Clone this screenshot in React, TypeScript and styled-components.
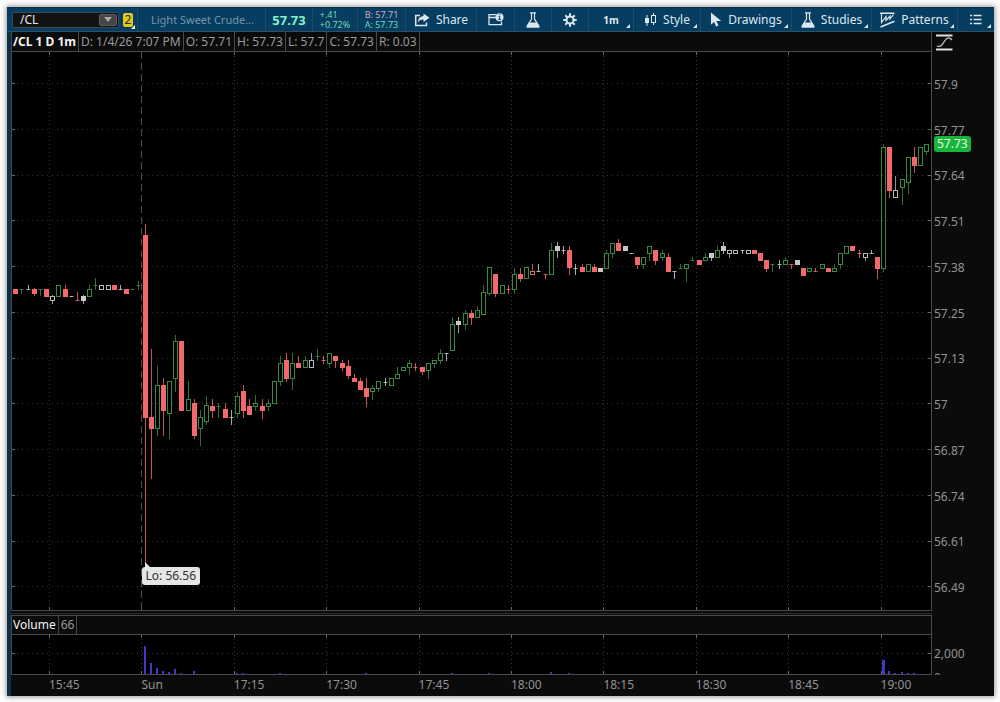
import React from "react";
import styled, { createGlobalStyle, css } from "styled-components";

const ink = "#dbe7ee";
const rule = "#4a4a4a";

const GlobalStyle = createGlobalStyle`
  *, *::before, *::after { box-sizing: border-box; }
  body { margin: 0; background: #fdfdfd; font-family: "Noto Sans", "Open Sans", sans-serif; }
  button, input { font: inherit; color: inherit; }
`;

const Page = styled.div`
  padding: 7px 6px 6px 7px;
`;

const Window = styled.main`
  background: #0b0b0c;
  box-shadow: 0 0 5px 1px rgba(0, 0, 0, 0.4);
`;

/* ---------- toolbar ---------- */

const Toolbar = styled.header`
  display: flex;
  height: 25px;
  background: #063d60;
  border-top: 1px solid #0a2f47;
  border-bottom: 1px solid #2c5068;
  color: ${ink};
  font-size: 12px;
  line-height: 16px;
`;

const cell = css<{ $w?: number }>`
  display: flex;
  align-items: center;
  justify-content: center;
  flex: ${(p) => (p.$w ? `0 0 ${p.$w}px` : "1 1 0")};
  min-width: 0;
  white-space: nowrap;
  border: 0;
  border-left: 1px solid #1d4c6b;
`;

const Cell = styled.div<{ $w?: number }>`
  ${cell}
`;

const ToolButton = styled.button<{ $w?: number; $menu?: boolean }>`
  ${cell}
  position: relative;
  gap: 6px;
  padding: 0;
  background: none;
  ${(p) =>
    p.$menu &&
    css`
      &::after {
        content: "";
        position: absolute;
        right: 3px;
        bottom: 3px;
        border-left: 4px solid transparent;
        border-bottom: 4px solid ${ink};
      }
    `}
`;

const SymbolCell = styled.div`
  display: flex;
  align-items: center;
  flex: 0 0 130px;
  gap: 4px;
  padding-left: 5px;
`;

const SymbolBox = styled.div`
  display: flex;
  align-items: center;
  width: 107px;
  height: 16px;
  padding-right: 1px;
  background: #131313;
  border: 1px solid #3b4a54;
  border-radius: 2px;
`;

const SymbolInput = styled.input`
  flex: 1;
  min-width: 0;
  height: 14px;
  padding: 0 0 0 7px;
  border: 0;
  background: none;
  color: #e6e6e6;
  outline: none;
`;

const DropButton = styled.button`
  display: grid;
  place-items: center;
  width: 18px;
  height: 12px;
  padding: 0;
  border: 1px solid #5c5c5c;
  border-radius: 2px;
  background: #454545;
  &::before {
    content: "";
    border: 4px solid transparent;
    border-top: 5px solid #a8a8a8;
    border-bottom: 0;
  }
`;

const LinkBadge = styled.button`
  position: relative;
  width: 10px;
  height: 14px;
  padding: 0;
  border: 0;
  border-radius: 2px;
  background: #e3c81c;
  color: #2c2600;
  line-height: 14px;
  &::after {
    content: "";
    position: absolute;
    right: -2px;
    bottom: -2px;
    border-left: 4px solid transparent;
    border-bottom: 4px solid #fff;
  }
`;

const Description = styled.span`
  padding-left: 2px;
  color: #7795a6;
  font-size: 11px;
`;

const LastPrice = styled.strong`
  color: #86f0cb;
  font-size: 13px;
`;

const Stack = styled.div<{ $color: string }>`
  color: ${(p) => p.$color};
  font-size: 9px;
  line-height: 10px;
`;

const BidLine = styled.div`
  color: #d9a9b4;
`;

const Interval = styled.strong`
  font-size: 10px;
`;

const Icon = styled.svg`
  flex: none;
  fill: none;
  stroke: ${ink};
`;

/* ---------- chart frame ---------- */

const Frame = styled.div`
  display: grid;
  grid-template-columns: minmax(0, 1fr) 62px;
  grid-template-rows: 20px 559px 4px 20px 40px 21px;
  border-left: 4px solid #0c3049;
`;

const StudyRow = styled.div`
  display: flex;
  background: #0b0b0c;
  border: 1px solid ${rule};
  border-top: 0;
  color: #9a9a9a;
  font-size: 12px;
  line-height: 19px;
`;

const StudyItem = styled.span<{ $title?: boolean; $bold?: boolean }>`
  padding: 0 2px 0 ${(p) => (p.$title ? 1 : 2)}px;
  white-space: nowrap;
  border-right: 1px solid ${rule};
  color: ${(p) => (p.$title ? "#f4f4f4" : "inherit")};
  font-weight: ${(p) => (p.$bold ? 700 : 400)};
`;

const VolumeRow = styled(StudyRow)`
  border-top: 1px solid ${rule};
  line-height: 18px;
`;

const ModeButton = styled.button`
  padding: 1px 0 0 4px;
  border: 0;
  background: none;
  text-align: left;
  line-height: 0;
`;

const Plot = styled.div`
  position: relative;
  background: #000;
  border: 1px solid ${rule};
  border-top: 0;
`;

const Drawing = styled.svg`
  display: block;
  width: 100%;
  height: 100%;
`;

const Callout = styled.div`
  position: absolute;
  padding: 0 4px;
  border-radius: 3px;
  background: #e6e6e6;
  color: #333;
  font-size: 12px;
  line-height: 18px;
  white-space: nowrap;
  &::before {
    content: "";
    position: absolute;
    left: 3px;
    top: -5px;
    border-left: 0 solid transparent;
    border-right: 6px solid transparent;
    border-bottom: 6px solid #e6e6e6;
  }
`;

const PriceAxis = styled.div`
  position: relative;
  display: grid;
  grid-auto-rows: 1fr;
  align-items: center;
  padding: 10px 0 0 2px;
  color: #929292;
  font-size: 12px;
  line-height: 16px;
`;

const PriceTag = styled.div`
  position: absolute;
  left: 2px;
  top: 84px;
  padding: 0 3px;
  border-radius: 3px;
  background: #17b53a;
  color: #e8ffe8;
  line-height: 16px;
`;

const Splitter = styled.div`
  border-bottom: 1px solid #2c2c2c;
  height: 3px;
`;

const VolumeAxis = styled.div`
  padding: 7px 0 0 2px;
  overflow: hidden;
  color: #929292;
  font-size: 12px;
  line-height: 24px;
`;

const TimeAxis = styled.div`
  grid-column: 1 / -1;
  display: grid;
  grid-template-columns: repeat(10, minmax(0, 1fr));
  padding: 0 21px 0 38px;
  color: #929292;
  font-size: 12px;
  line-height: 20px;
`;

/* ---------- data ---------- */

/*
 * One candle per minute: kind, high, body top, body bottom, low.
 * r = filled down, G = hollow up, W = hollow unchanged, w = filled unchanged,
 * R = hollow red, g = thin green. Equal body values draw a dash.
 */
const candleText = `
r 289 289 293 293|g 289 289 289 293|w 285 289 289 289|r 288 289 293 295|g 289 289 289 295
r 289 289 296 296|W 295 296 300 303|G 285 285 296 296|r 285 289 296 296|w 296 296 296 296
r 292 300 300 300|w 295 296 300 303|G 285 289 296 296|g 278 285 285 289|W 285 285 289 289
W 285 285 289 289|r 285 285 289 289|w 285 289 289 289|r 289 289 293 293|g 289 289 289 289
g 281 285 285 289|r 224 235 417 562|r 349 417 428 478|G 366 385 428 435|r 378 385 410 435
G 381 381 413 438|G 335 341 378 391|r 341 341 410 410|G 381 399 410 410|r 399 403 435 438
G 410 417 428 445|G 396 405 421 424|r 399 406 410 417|g 403 406 406 417|r 403 409 417 417
w 410 417 417 424|G 392 396 413 417|r 385 391 410 417|r 399 406 414 414|G 395 403 406 410
r 399 406 410 418|G 399 403 406 410|G 381 381 403 403|G 356 363 381 385|r 353 360 378 381
G 353 363 378 389|r 356 363 367 367|G 356 360 367 367|W 353 360 367 367|g 349 356 356 360
r 356 360 360 363|G 353 353 363 367|r 356 356 360 367|r 360 363 367 370|r 360 366 375 378
r 374 378 381 381|r 378 381 389 389|r 378 388 396 406|G 385 388 391 399|G 381 381 388 391
w 378 382 382 385|G 378 378 385 385|G 367 374 378 378|G 367 367 370 370|G 360 363 367 374
r 363 367 367 370|r 367 367 371 374|G 363 363 370 378|G 360 360 363 367|G 349 353 360 363
w 353 353 353 360|G 317 324 350 350|w 317 321 324 332|G 310 313 324 329|r 310 313 317 324
G 306 310 317 317|G 285 292 314 314|G 267 267 293 295|r 274 274 293 296|G 285 285 293 293
r 285 289 289 293|G 268 274 289 293|r 268 274 278 281|G 267 267 278 278|R 264 271 274 274
w 264 271 271 271|r 274 274 274 278|G 243 250 274 274|w 242 246 250 257|w 246 250 250 253
r 246 250 267 274|w 264 268 268 274|r 264 267 271 271|G 264 264 271 271|r 264 267 271 271
w 268 268 271 271|G 250 253 268 268|G 243 243 253 257|r 239 243 250 250|w 246 246 250 250
w 253 253 253 253|r 257 257 264 268|G 257 257 264 268|G 246 246 253 260|r 250 250 260 264
G 250 253 257 260|r 253 257 271 271|w 271 271 271 278|g 264 268 268 268|G 264 264 268 281
g 257 260 260 260|r 260 260 264 264|G 253 257 260 260|w 253 253 257 260|G 246 250 257 257
w 242 246 250 253|W 250 250 253 257|W 250 250 253 253|w 250 250 250 253|W 250 250 253 253
r 250 250 253 253|r 253 253 260 260|r 260 260 268 271|g 264 264 264 271|w 260 264 264 268
G 257 260 264 264|r 264 264 264 268|w 260 260 264 264|r 268 268 275 275|G 268 268 271 271
r 268 271 271 271|G 264 264 268 268|r 268 268 271 271|G 264 268 271 271|G 253 253 264 268
G 246 246 253 253|r 246 246 250 250|r 250 253 253 257|W 253 253 257 260|w 250 253 253 253
r 257 257 268 278|G 144 147 268 271|r 147 147 190 197|W 176 190 197 197|G 179 179 187 204
G 157 157 182 193|r 147 157 165 172|G 147 147 165 165|G 144 144 151 154`;

const candles = candleText
  .trim()
  .split(/[|\n]/)
  .map((entry) => {
    const [kind, ...values] = entry.trim().split(" ");
    const [high, top, bottom, low] = values.map(Number);
    return { kind, high, top, bottom, low };
  });

const volumes: [number, number][] = [
  [8, 1], [21, 29], [22, 12], [23, 7], [24, 4], [25, 3], [26, 6], [27, 2], [29, 4],
  [30, 1], [31, 1], [33, 1], [35, 1], [36, 2], [37, 2], [43, 2], [44, 1], [45, 1],
  [57, 2], [64, 1], [71, 2], [76, 1], [77, 2], [87, 3], [88, 1], [90, 2], [103, 1],
  [140, 1], [141, 15], [142, 4], [143, 2], [144, 3], [145, 2], [146, 2], [147, 1],
];

const prices = ["57.9", "57.77", "57.64", "57.51", "57.38", "57.25", "57.13", "57", "56.87", "56.74", "56.61", "56.49"];
const times = ["15:45", "Sun", "17:15", "17:30", "17:45", "18:00", "18:15", "18:30", "18:45", "19:00"];

const candleX = (i: number) => Math.round(15.3 + 6.155 * i) + 0.5;
const gridX = times.map((_, i) => Math.round(49 + 92.4 * i) + 0.5);
const gridY = prices.map((_, i) => Math.round(83 + 45.75 * i) + 0.5);

const colorOf: Record<string, string> = {
  r: "#f2696b", R: "#e0686b", G: "#378a44", g: "#378a44", W: "#b8b8b8", w: "#c8c8c8",
};

function Candle({ index }: { index: number }) {
  const { kind, high, top, bottom, low } = candles[index];
  const x = candleX(index);
  const color = colorOf[kind];
  const hollow = kind === "G" || kind === "W" || kind === "R";
  if (top === bottom) {
    return <path d={`M${x - 2} ${top + 0.5}h4M${x} ${high}V${low + 1}`} stroke={color} opacity={0.85} />;
  }
  return (
    <g>
      {high < top && <path d={`M${x} ${high}V${top}`} stroke={color} opacity={0.8} />}
      {low > bottom && <path d={`M${x} ${bottom + 1}V${low + 1}`} stroke={color} opacity={0.8} />}
      {hollow ? (
        <rect x={x - 2} y={top + 0.5} width={4} height={bottom - top} stroke={color} />
      ) : (
        <rect x={x - 2.5} y={top} width={5} height={bottom - top + 1} fill={color} />
      )}
    </g>
  );
}

function PricePlot() {
  return (
    <Drawing viewBox="12 52 919 558" preserveAspectRatio="none" fill="none">
      <g stroke="#363636">
        {gridY.map((y) => <path key={y} d={`M12 ${y}H931`} strokeDasharray="1 4" />)}
        {gridX.map((x, i) => i !== 1 && <path key={x} d={`M${x} 52V610`} strokeDasharray="1 3" />)}
      </g>
      <g stroke="#6a6a6a">
        {gridY.map((y) => <path key={y} d={`M12 ${y}h3M928 ${y}h3`} />)}
        {gridX.map((x) => <path key={x} d={`M${x} 52v3M${x} 607v3`} />)}
      </g>
      <path d={`M${gridX[1]} 52V610`} stroke="#4c4c4c" strokeDasharray="7 4" />
      {candles.map((_, i) => <Candle key={i} index={i} />)}
    </Drawing>
  );
}

function VolumePlot() {
  return (
    <Drawing viewBox="12 635 919 39" preserveAspectRatio="none" fill="none">
      <path d="M12 653.5H931" stroke="#404040" strokeDasharray="1 4" />
      {gridX.map((x) => (
        <g key={x}>
          <path d={`M${x} 635V674`} stroke="#363636" strokeDasharray="1 3" />
          <path d={`M${x} 635v3M${x} 671v3`} stroke="#6a6a6a" />
        </g>
      ))}
      <path d="M12 653.5h3M928 653.5h3" stroke="#6a6a6a" />
      {volumes.map(([i, h]) => (
        <rect key={i} x={candleX(i) - 1.5} y={675 - h} width={h > 10 && i > 100 ? 3 : 2} height={h} fill="#4238c4" />
      ))}
    </Drawing>
  );
}

/* ---------- icons ---------- */

const FlaskIcon = () => (
  <Icon width="14" height="16" viewBox="0 0 14 16">
    <path d="M4 .8h6M5.500 1v6L1.500 13.500V15h11v-1.500L8.500 7V1" strokeWidth="1.200" />
    <path d="M3.500 10.500h7L13.500 14v1.500H.5V14z" fill={ink} stroke="none" />
  </Icon>
);

const ShareIcon = () => (
  <Icon width="16" height="14" viewBox="0 0 16 14">
    <path d="M6 2.500H1.700v10h10.800V9.500" strokeWidth="1.500" />
    <path d="M9.500.5L15.500 4.800 9.500 9V6.500C6.500 6.400 5 7.500 3.800 9.800 4 6 6 3.300 9.500 3z" fill={ink} stroke="none" />
  </Icon>
);

const InfoWindowIcon = () => (
  <Icon width="16" height="13" viewBox="0 0 16 13">
    <path d="M8 1.700H1v10h12.500V8.500M1 4.500h7" strokeWidth="1.300" />
    <circle cx="11.500" cy="4.300" r="4" fill={ink} stroke="none" />
    <path d="M10.500 3.400h1.200V6.500M10.300 6.500h2.600M11.200 1.700h1" stroke="#063d60" />
  </Icon>
);

const GearIcon = () => (
  <Icon width="14" height="14" viewBox="0 0 14 14">
    <circle cx="7" cy="7" r="3.500" strokeWidth="2" />
    {[0, 45, 90, 135, 180, 225, 270, 315].map((a) => (
      <path key={a} d="M7 .3V3" strokeWidth="2" transform={`rotate(${a} 7 7)`} />
    ))}
  </Icon>
);

const CandlesIcon = () => (
  <Icon width="13" height="14" viewBox="0 0 13 14">
    <path d="M3 2v11M9.500 0v2.500M9.500 9v3" />
    <rect x="1" y="5" width="4" height="5" fill={ink} stroke="none" />
    <rect x="7.500" y="2.500" width="4" height="7" />
  </Icon>
);

const PointerIcon = () => (
  <Icon width="12" height="15" viewBox="0 0 12 15">
    <path d="M1 .5v12.300l3.100-2.900 2 4.500 2.300-1-2-4.400h4.800z" fill={ink} stroke="none" />
  </Icon>
);

const PatternsIcon = () => (
  <Icon width="15" height="16" viewBox="0 0 15 16">
    <path d="M0 1.200h14.500M.5 15L14.500 9.200" strokeWidth="1.500" />
    <path d="M1.500 2v8.500L6 4.500v4L10 4v3L13.500 2.500" strokeWidth="1.200" />
  </Icon>
);

const ListIcon = () => (
  <Icon width="12" height="11" viewBox="0 0 12 11">
    <path d="M0 1.500h2M3.500 1.500h8M0 5.500h2M3.500 5.500h8M0 9.500h2M3.500 9.500h8" strokeWidth="1.500" />
  </Icon>
);

const CurveIcon = () => (
  <Icon width="17" height="17" viewBox="0 0 17 17">
    <path d="M0 1.500h16.500M0 15.500h16.500" strokeWidth="2" stroke="#e0e0e0" />
    <path d="M.8 12c4.500 1.500 5.500-1.500 7.500-4.500S12 2.800 14.500 4.500l1.500 1.500" strokeWidth="1.300" stroke="#c8c8c8" />
  </Icon>
);

/* ---------- page ---------- */

const lowBar = 21;
const calloutLeft = `${((candleX(lowBar) - 16) / 919) * 100}%`;

export default function App() {
  return (
    <Page>
      <GlobalStyle />
      <Window>
        <Toolbar>
          <SymbolCell>
            <SymbolBox>
              <SymbolInput aria-label="Symbol" defaultValue="/CL" />
              <DropButton aria-label="Recent symbols" />
            </SymbolBox>
            <LinkBadge>2</LinkBadge>
          </SymbolCell>
          <Cell><Description>Light Sweet Crude...</Description></Cell>
          <Cell $w={47}><LastPrice>57.73</LastPrice></Cell>
          <Cell $w={45}>
            <Stack $color="#6fd9bb"><div>+.41</div><div>+0.72%</div></Stack>
          </Cell>
          <Cell $w={48}>
            <Stack $color="#6fd9bb"><BidLine>B: 57.71</BidLine><div>A: 57.73</div></Stack>
          </Cell>
          <ToolButton $w={71}><ShareIcon />Share</ToolButton>
          <ToolButton $w={38} aria-label="Chart details"><InfoWindowIcon /></ToolButton>
          <ToolButton $w={37} aria-label="Edit studies"><FlaskIcon /></ToolButton>
          <ToolButton $w={37} aria-label="Chart settings"><GearIcon /></ToolButton>
          <ToolButton $w={45} $menu><Interval>1m</Interval></ToolButton>
          <ToolButton $w={67} $menu><CandlesIcon />Style</ToolButton>
          <ToolButton $w={91} $menu><PointerIcon />Drawings</ToolButton>
          <ToolButton $w={80} $menu><FlaskIcon />Studies</ToolButton>
          <ToolButton $w={86} $menu><PatternsIcon />Patterns</ToolButton>
          <ToolButton $w={37} aria-label="More" $menu><ListIcon /></ToolButton>
        </Toolbar>

        <Frame>
          <StudyRow>
            <StudyItem $title $bold>/CL 1 D 1m</StudyItem>
            <StudyItem>D: 1/4/26 7:07 PM</StudyItem>
            <StudyItem>O: 57.71</StudyItem>
            <StudyItem>H: 57.73</StudyItem>
            <StudyItem>L: 57.7</StudyItem>
            <StudyItem>C: 57.73</StudyItem>
            <StudyItem>R: 0.03</StudyItem>
          </StudyRow>
          <ModeButton aria-label="Axis mode"><CurveIcon /></ModeButton>

          <Plot>
            <PricePlot />
            <Callout style={{ left: calloutLeft, top: 515 }}>Lo: 56.56</Callout>
          </Plot>
          <PriceAxis>
            {prices.map((p) => <span key={p}>{p}</span>)}
            <PriceTag>57.73</PriceTag>
          </PriceAxis>

          <Splitter />
          <span />

          <VolumeRow>
            <StudyItem $title>Volume</StudyItem>
            <StudyItem>66</StudyItem>
          </VolumeRow>
          <span />

          <Plot><VolumePlot /></Plot>
          <VolumeAxis>
            <div>2,000</div>
            <div>0</div>
          </VolumeAxis>

          <TimeAxis>
            {times.map((t) => <span key={t}>{t}</span>)}
          </TimeAxis>
        </Frame>
      </Window>
    </Page>
  );
}
